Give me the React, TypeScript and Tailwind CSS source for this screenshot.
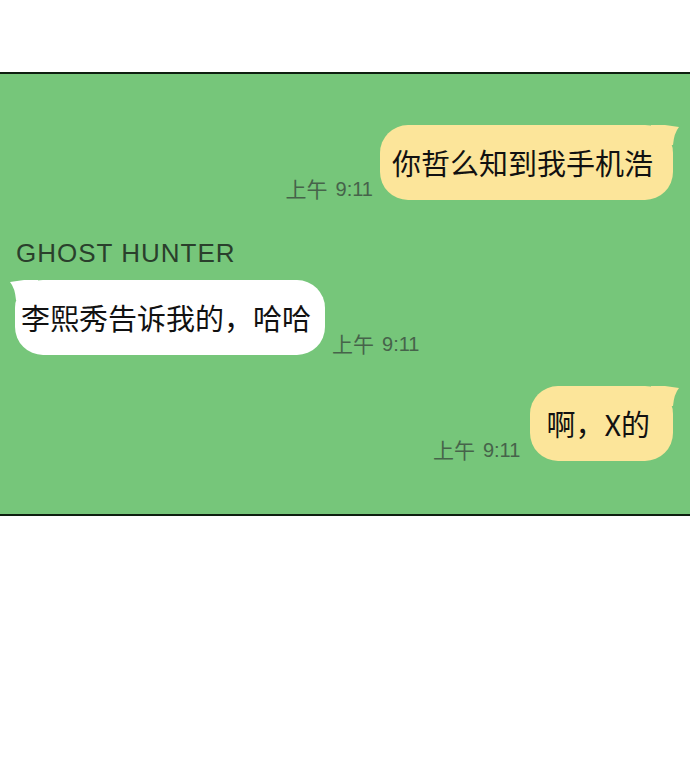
import type { ReactNode } from "react";

const cjk = { fontFamily: '"Noto Sans CJK SC", "Noto Sans", sans-serif' };
const latin = { fontFamily: '"Liberation Sans", "Noto Sans CJK SC", sans-serif' };

function Tail({ side, color }: { side: "left" | "right"; color: string }) {
  return (
    <svg
      width="28"
      height="24"
      viewBox="0 0 28 24"
      className={side === "right" ? "absolute top-0 right-[-6px]" : "absolute top-0 left-[-5px] -scale-x-100"}
    >
      <path d="M0 0 L14 0 Q21 1 28 2 Q23 8 22 20 L0 22 Z" fill={color} />
    </svg>
  );
}

function Stamp({ children }: { children: ReactNode }) {
  return (
    <span className="text-[20px] leading-none text-[#46634a] mb-[1px] whitespace-nowrap flex items-end" style={latin}>
      <span className="text-[21px]" style={cjk}>上午</span>
      <span className="ml-[8px]">{children}</span>
    </span>
  );
}

function Bubble({ text, side, pad }: { text: string; side: "left" | "right"; pad: string }) {
  const color = side === "right" ? "#fce59a" : "#ffffff";
  return (
    <div
      className={
        "relative rounded-[28px] py-[17px] text-[29px] leading-[41px] text-[#111] whitespace-nowrap " +
        pad +
        (side === "right" ? " bg-[#fce59a]" : " bg-white")
      }
      style={cjk}
    >
      <Tail side={side} color={color} />
      <span className="relative">{text}</span>
    </div>
  );
}

export default function App() {
  return (
    <div className="w-[690px] h-[778px] bg-white flex flex-col">
      <div className="h-[72px]" />

      <div className="bg-[#76c67a] border-y-2 border-[#0e1f10] pt-[51px] pb-[53px] pl-[15px] pr-[17px] flex flex-col">
        {/* me */}
        <div className="flex justify-end items-end gap-[7px]">
          <Stamp>9:11</Stamp>
          <Bubble side="right" pad="pl-[12px] pr-[20px]" text="你哲么知到我手机浩" />
        </div>

        {/* them */}
        <p className="mt-[38px] text-[26px] leading-[30px] tracking-[1px] text-[#2a3f2c] pl-[1px]" style={latin}>
          GHOST HUNTER
        </p>
        <div className="mt-[12px] flex items-end gap-[7px]">
          <Bubble side="left" pad="pl-[6px] pr-[14px]" text="李熙秀告诉我的，哈哈" />
          <Stamp>9:11</Stamp>
        </div>

        {/* me */}
        <div className="mt-[31px] flex justify-end items-end gap-[10px]">
          <Stamp>9:11</Stamp>
          <Bubble side="right" pad="pl-[16px] pr-[23px]" text="啊，X的" />
        </div>
      </div>

      <div className="flex-1" />
    </div>
  );
}
